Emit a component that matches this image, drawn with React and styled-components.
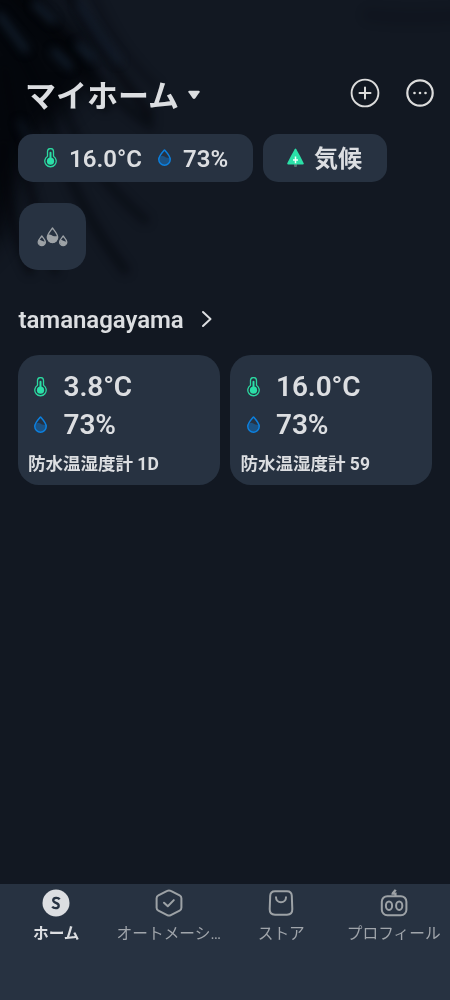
import React from 'react';
import styled, { createGlobalStyle } from 'styled-components';

const Global = createGlobalStyle`
  * { box-sizing: border-box; }
  body { margin: 0; background: #121822; }
`;

const Screen = styled.div`
  position: relative;
  width: 450px;
  height: 1000px;
  overflow: hidden;
  display: flex;
  flex-direction: column;
  background: #121822;
  color: #dcdee1;
  font-family: Roboto, 'Noto Sans CJK JP', sans-serif;
  white-space: nowrap;
`;

const Backdrop = styled.svg`
  position: absolute;
  left: 0;
  top: 0;
`;

const Main = styled.main`
  position: relative;
  flex: 1;
  padding: 72px 18px 0 17.5px;
`;

const Header = styled.header`
  display: flex;
  align-items: center;
  height: 44px;
  padding-left: 7.5px;
  margin-right: -4px;
`;

const Title = styled.h1`
  margin: 0;
  font: 700 31px/44px 'Noto Sans CJK JP', sans-serif;
`;

const Caret = styled.svg`
  margin: 2px auto 0 8px;
`;

const HeaderIcon = styled.svg`
  margin: -2px 0 0 23.5px;
`;

const Pills = styled.div`
  display: flex;
  gap: 10px;
  margin-top: 18px;
`;

const Pill = styled.div`
  display: flex;
  align-items: center;
  width: ${(p) => p.$width}px;
  height: 47.5px;
  padding-left: ${(p) => p.$inset}px;
  border-radius: 15px;
  background: #273241;
  font-size: 24px;
`;

const PillText = styled.span`
  width: ${(p) => p.$width}px;
  margin-left: ${(p) => p.$gap}px;
  padding-top: 3px;
  line-height: 36px;
  font-weight: ${(p) => (p.$bold ? 700 : 640)};
`;

const PillDrop = styled.span`
  display: flex;
  margin-left: 12.5px;
`;

const SceneButton = styled.div`
  display: flex;
  align-items: center;
  justify-content: center;
  width: 67px;
  height: 67px;
  margin: 21.5px 0 0 1.5px;
  border-radius: 19px;
  background: #273241;
`;

const Section = styled.h2`
  display: flex;
  align-items: center;
  gap: 17px;
  height: 36px;
  margin: 32px 0 0 1px;
  font-size: 24px;
  font-weight: 640;
  letter-spacing: -0.05px;
`;

const Chevron = styled.svg`
  margin-bottom: 3px;
`;

const Cards = styled.div`
  display: grid;
  grid-template-columns: 202px 202px;
  gap: 10.5px;
  margin-top: 17px;
`;

const Card = styled.article`
  height: 130px;
  padding: 13px 10.5px 0;
  border-radius: 21px;
  background: #273241;
`;

const Reading = styled.div`
  display: flex;
  align-items: center;
  gap: 16.5px;
  height: 37.5px;
  padding-left: 6px;
  font-size: 28px;
  font-weight: 640;
  letter-spacing: -0.1px;
`;

const DeviceName = styled.div`
  margin-top: 8px;
  font: 700 17.5px/26px Roboto, 'Noto Sans CJK JP', sans-serif;
`;

const Nav = styled.nav`
  position: relative;
  display: grid;
  grid-template-columns: repeat(4, 112.5px);
  height: 116px;
  padding-top: 4px;
  background: #273241;
`;

const Tab = styled.div`
  display: flex;
  flex-direction: column;
  align-items: center;
  color: ${(p) => (p.$active ? '#dcdee1' : '#a0a5ab')};
  font: ${(p) => (p.$active ? 700 : 400)} 15.7px/24px Roboto, 'Noto Sans CJK JP', sans-serif;
`;

const TabLabel = styled.span`
  margin-top: 4px;
`;

const Thermometer = () => (
  <svg width="13" height="20" viewBox="0 0 13 20" fill="none">
    <path d="M3.500 8.200V3.600a3 3 0 0 1 6 0v4.600a5.700 5.700 0 1 1-6 0Z" stroke="#2bd9a0" strokeWidth="1.300" />
    <circle cx="6.500" cy="13.200" r="3.600" fill="#2be0a8" />
    <path d="M6.500 4.800v7" stroke="#2be0a8" strokeWidth="2" strokeLinecap="round" />
  </svg>
);

const Drop = () => (
  <svg width="13" height="17" viewBox="0 0 13 17" fill="none">
    <path d="M1.500 8.200Q3.500 5.500 6.400 7.600T11.600 8.200Q13.500 15.500 6.500 16Q-.4 15.400 1.500 8.200Z" fill="#1c5283" />
    <path d="M6.500 1C4.600 3.200.8 7 .8 10.500a5.700 5.700 0 0 0 11.400 0C12.200 7 8.400 3.200 6.500 1Z" stroke="#0c80df" strokeWidth="1.500" strokeLinejoin="round" />
  </svg>
);

const Tree = () => (
  <svg width="17" height="20" viewBox="0 0 17 20">
    <rect x="7" y="14" width="3" height="5" rx="1" fill="#58716f" />
    <path d="M7.700 1.200q.8-1.200 1.600 0L12.800 7.500l3.800 7.600q.6 1.400-.9 1.400H1.300q-1.500 0-.9-1.400L4.200 7.500Z" fill="#2be0a8" />
    <path d="M8.500 8.400v6.800M6 12.100h5" stroke="#effff9" strokeWidth="1.500" />
  </svg>
);

const Droplets = () => (
  <svg width="31" height="20" viewBox="0 0 31 20" fill="none">
    <g stroke="#9da2a6" strokeWidth="1.300" strokeLinejoin="round">
      <path d="M15.500 1C13.500 3.700 10.300 7 10.300 10.300a5.200 5.200 0 0 0 10.400 0C20.700 7 17.500 3.700 15.500 1Z" />
      <path d="M4.800 9C3.500 10.700 1.200 12.900 1.200 15.100a3.600 3.600 0 0 0 7.200 0C8.400 12.900 6.100 10.700 4.800 9Z" />
      <path d="M26.200 9C24.900 10.700 22.600 12.900 22.600 15.100a3.600 3.600 0 0 0 7.200 0C29.800 12.900 27.500 10.700 26.200 9Z" />
    </g>
    <g fill="#9da2a6">
      <path d="M11 7.800C13 6.800 14.500 8.300 16 8.900S19.200 9.500 20.500 8.800V11a5 5 0 0 1-10 0Z" />
      <path d="M1.800 12.900C3.700 12.300 5 15.100 8.200 14.200V16a3.400 3.400 0 0 1-6.600 0Z" />
      <path d="M23.200 12.900C25.100 12.300 26.400 15.100 29.600 14.200V16a3.400 3.400 0 0 1-6.600 0Z" />
    </g>
  </svg>
);

const HomeIcon = () => (
  <svg width="30" height="30" viewBox="0 0 30 30">
    <circle cx="15" cy="15" r="13.500" fill="#dcdee1" />
    <path d="M18.600 11.400C17.400 9.200 12.200 9.100 12.200 12.300C12.200 15.400 18.200 14.500 17.700 18C17.200 21.100 12.500 20.500 11.200 18.600" fill="none" stroke="#273241" strokeWidth="2.300" />
  </svg>
);

const AutomationIcon = () => (
  <svg width="30" height="30" viewBox="0 0 30 30" fill="none" stroke="#9da2a6" strokeWidth="2" strokeLinejoin="round" strokeLinecap="round">
    <path d="M13.200 2.900Q15 1.900 16.800 2.900L25.600 7.300Q27.400 8.200 27.400 10.200V19.700Q27.400 21.700 25.600 22.600L16.800 27.100Q15 28.100 13.200 27.100L4.400 22.600Q2.600 21.700 2.600 19.700V10.200Q2.600 8.200 4.400 7.300Z" />
    <path d="M10 14.700l3.800 3.600 6-6.200" />
  </svg>
);

const StoreIcon = () => (
  <svg width="30" height="30" viewBox="0 0 30 30" fill="none" stroke="#9da2a6" strokeWidth="2" strokeLinecap="round">
    <path d="M9 3.300H21Q25.600 3.300 25.800 7.900L26.300 21Q26.500 26.700 21 26.700H9Q3.500 26.700 3.700 21L4.200 7.900Q4.400 3.300 9 3.300Z" />
    <path d="M10 9.200a5 5 0 0 0 10 0" />
  </svg>
);

const ProfileIcon = () => (
  <svg width="30" height="30" viewBox="0 0 30 30" fill="none" stroke="#9da2a6" strokeWidth="2">
    <rect x="2.800" y="8.200" width="24.600" height="19" rx="5.500" />
    <ellipse cx="10" cy="17.700" rx="3.100" ry="4.300" />
    <ellipse cx="20.200" cy="17.700" rx="3.100" ry="4.300" />
    <path d="M16.600 1.700C15.800 3.500 13.700 4.300 13.600 5.700H16.500V8.500" strokeWidth="2.200" />
  </svg>
);

const Shadows = () => (
  <Backdrop width="450" height="340" viewBox="0 0 450 340" fill="none">
    <defs>
      <filter id="soft" filterUnits="userSpaceOnUse" x="-40" y="-40" width="530" height="400" colorInterpolationFilters="sRGB"><feGaussianBlur stdDeviation="4" /></filter>
      <filter id="wide" filterUnits="userSpaceOnUse" x="-60" y="-60" width="400" height="440" colorInterpolationFilters="sRGB"><feGaussianBlur stdDeviation="11" /></filter>
    </defs>
    <path d="M-40-40H25Q50 20 85 38Q100 80 70 105Q35 125 12 200Q5 250-40 270Z" fill="#010307" opacity=".8" filter="url(#wide)" />
    <g stroke="#010307" strokeLinecap="round" filter="url(#soft)">
      <path d="M15-5Q65 35 105 105" strokeWidth="13" opacity=".6" />
      <path d="M65-10Q95 45 150 115" strokeWidth="9" opacity=".55" />
      <path d="M92-10Q115 50 158 88" strokeWidth="6" opacity=".3" />
      <path d="M-5 20Q35 65 55 135T125 270" strokeWidth="9" opacity=".45" />
      <path d="M5 70Q20 170 55 270" strokeWidth="9" opacity=".5" />
      <path d="M55 85Q80 165 145 220" strokeWidth="9" opacity=".4" />
      <path d="M3 145Q5 220 30 270" strokeWidth="10" opacity=".5" />
      <path d="M70 40Q110 100 150 125" strokeWidth="9" opacity=".45" />
      <path d="M370 15Q410 20 465 15" strokeWidth="14" opacity=".12" />
    </g>
    <g stroke="#142030" strokeLinecap="round" filter="url(#soft)">
      <path d="M0 16L25 49" strokeWidth="8" opacity=".8" />
      <path d="M36 5L52 20" strokeWidth="8" opacity=".8" />
      <path d="M55 52L69 66M79 46L91 57" strokeWidth="8" opacity=".8" />
      <path d="M80 5Q100 40 118 60" strokeWidth="8" opacity=".6" />
      <path d="M20 123L38 157" strokeWidth="7" opacity=".5" />
    </g>
  </Backdrop>
);

const devices = [
  { name: '防水温湿度計 1D', temp: '3.8°C', humidity: '73%' },
  { name: '防水温湿度計 59', temp: '16.0°C', humidity: '73%' },
];

const tabs = [
  { label: 'ホーム', Icon: HomeIcon, active: true },
  { label: 'オートメーシ…', Icon: AutomationIcon },
  { label: 'ストア', Icon: StoreIcon },
  { label: 'プロフィール', Icon: ProfileIcon },
];

export default function App() {
  return (
    <Screen>
      <Global />
      <Shadows />
      <Main>
        <Header>
          <Title>マイホーム</Title>
          <Caret width="14" height="10" viewBox="0 0 14 10"><path d="M2.300.8H11.700Q13.500.8 12.500 2.300L8.300 8.300Q7 9.800 5.700 8.300L1.500 2.300Q.5.8 2.300.8Z" fill="#dcdee1" /></Caret>
          <HeaderIcon width="32" height="32" viewBox="0 0 32 32" fill="none" stroke="#dcdcdc">
            <circle cx="16" cy="16" r="13.400" strokeWidth="1.900" />
            <path d="M16 10.500v11M10.500 16h11" strokeWidth="2" strokeLinecap="round" />
          </HeaderIcon>
          <HeaderIcon width="32" height="32" viewBox="0 0 32 32">
            <circle cx="16" cy="16" r="12.700" fill="none" stroke="#dcdcdc" strokeWidth="2.200" />
            <g fill="#dcdcdc"><circle cx="10.500" cy="16" r="1.300" /><circle cx="16" cy="16" r="1.300" /><circle cx="21.500" cy="16" r="1.300" /></g>
          </HeaderIcon>
        </Header>
        <Pills>
          <Pill $width={235.5} $inset={26}>
            <Thermometer />
            <PillText $width={76} $gap={12.5}>16.0°C</PillText>
            <PillDrop><Drop /></PillDrop>
            <PillText $width={46} $gap={12.5}>73%</PillText>
          </Pill>
          <Pill $width={123.5} $inset={24}>
            <Tree />
            <PillText $width={48} $gap={10} $bold>気候</PillText>
          </Pill>
        </Pills>
        <SceneButton><Droplets /></SceneButton>
        <Section>
          tamanagayama
          <Chevron width="12" height="18" viewBox="0 0 12 18" fill="none" stroke="#dcdee1" strokeWidth="2" strokeLinecap="round" strokeLinejoin="round"><path d="M2 2l7.500 7L2 16" /></Chevron>
        </Section>
        <Cards>
          {devices.map((d) => (
            <Card key={d.name}>
              <Reading><Thermometer />{d.temp}</Reading>
              <Reading><Drop />{d.humidity}</Reading>
              <DeviceName>{d.name}</DeviceName>
            </Card>
          ))}
        </Cards>
      </Main>
      <Nav>
        {tabs.map(({ label, Icon, active }) => (
          <Tab key={label} $active={active}><Icon /><TabLabel>{label}</TabLabel></Tab>
        ))}
      </Nav>
    </Screen>
  );
}
